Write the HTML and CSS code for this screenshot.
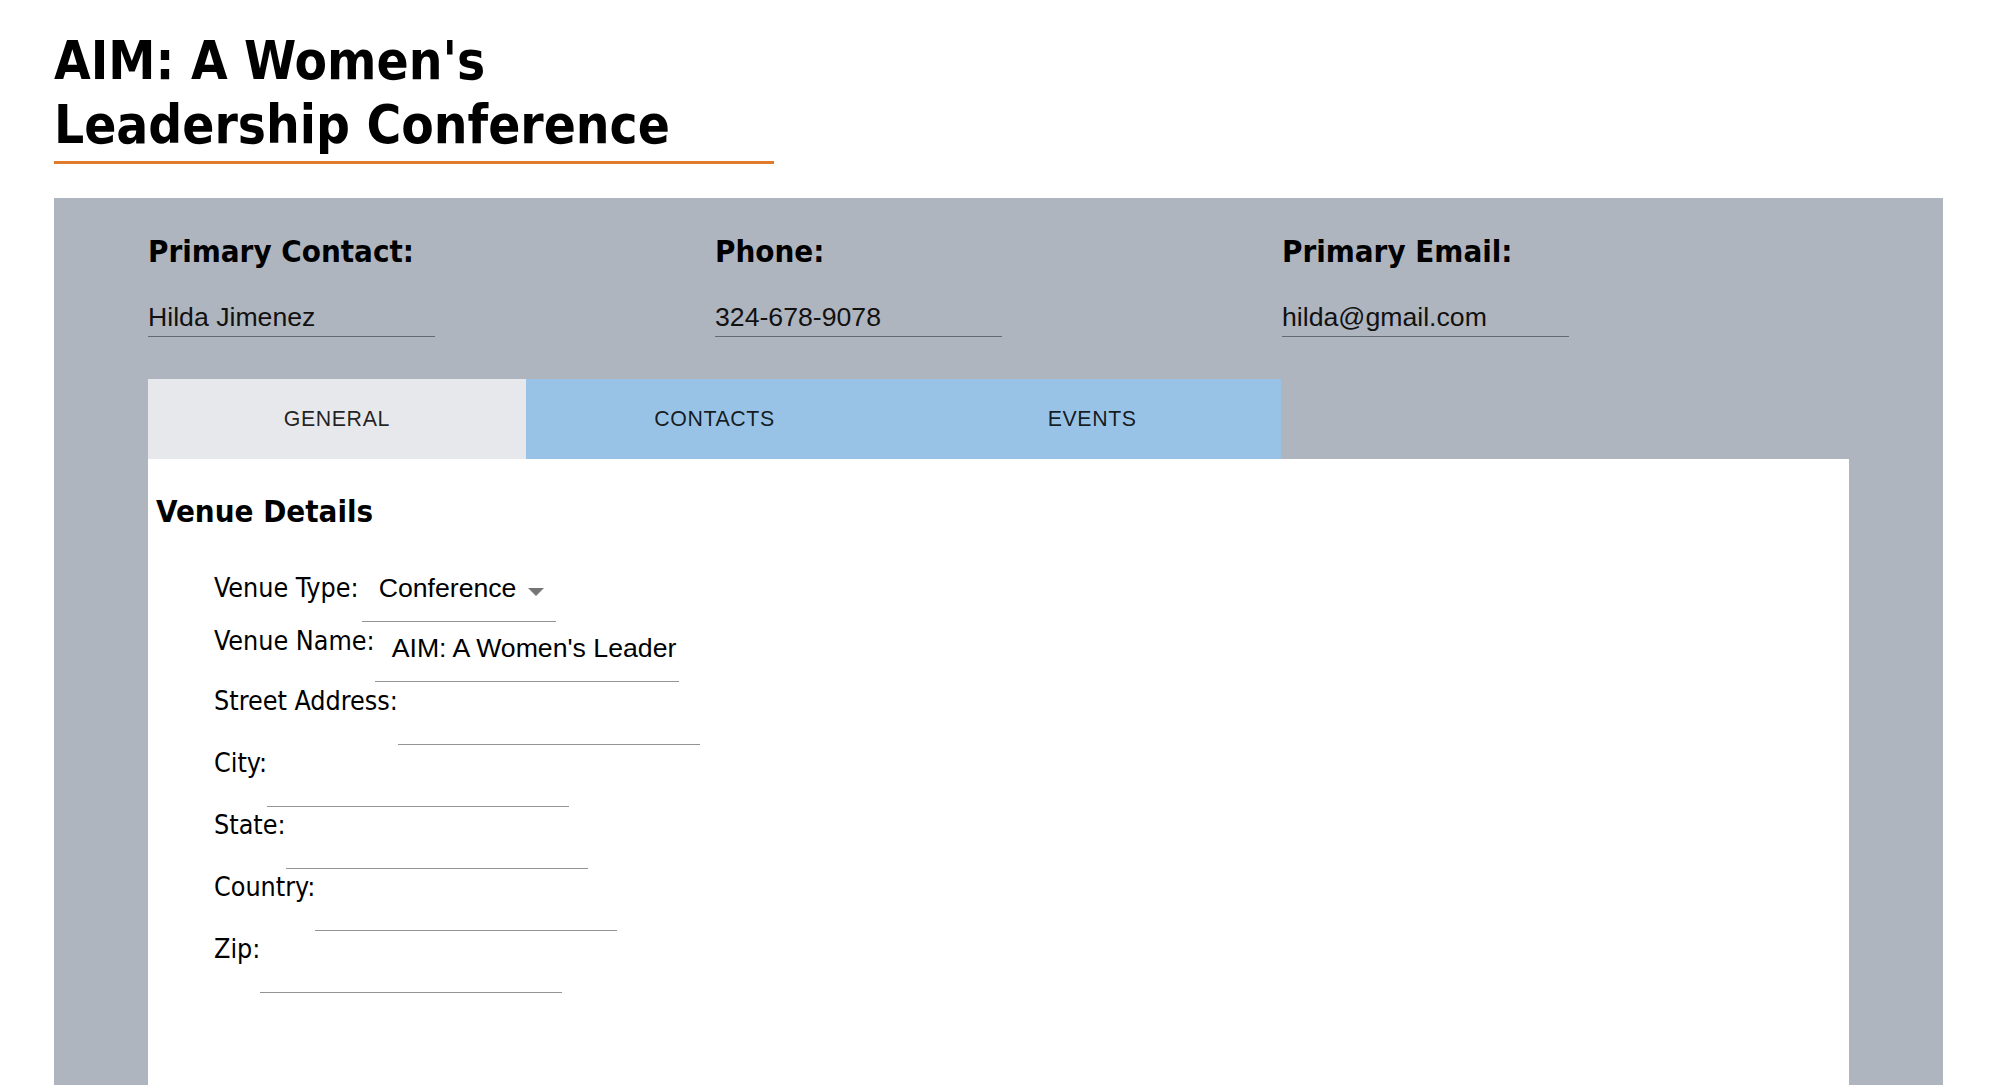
FILE: index.html
```html
<!DOCTYPE html>
<html>
<head>
<meta charset="utf-8">
<link rel="stylesheet" href="styles.css">
</head>
<body>
<div class="page">
  <h1 class="title">AIM: A Women's<br>Leadership Conference</h1>
  <div class="panel">
    <div class="summary">
      <div class="summary-item">
        <div class="summary-label">Primary Contact:</div>
        <div class="summary-value">Hilda Jimenez</div>
      </div>
      <div class="summary-item">
        <div class="summary-label">Phone:</div>
        <div class="summary-value">324-678-9078</div>
      </div>
      <div class="summary-item">
        <div class="summary-label">Primary Email:</div>
        <div class="summary-value">hilda@gmail.com</div>
      </div>
    </div>
    <div class="tabs">
      <div class="tab tab-active">GENERAL</div>
      <div class="tab">CONTACTS</div>
      <div class="tab">EVENTS</div>
    </div>
    <div class="content">
      <h2 class="section-title">Venue Details</h2>
      <div class="form">
        <div class="field field-select">
          <span class="field-label">Venue Type:</span>
          <div class="select">
            <span class="select-value">Conference</span>
            <svg class="select-arrow" width="16" height="8" viewBox="0 0 16 8"><path d="M0 0 L16 0 L8 8 Z" fill="#757575"/></svg>
          </div>
        </div>
        <div class="field field-name">
          <span class="field-label">Venue Name:</span>
          <div class="input input-filled"><span class="input-text">AIM: A Women's Leader</span></div>
        </div>
        <div class="field">
          <span class="field-label">Street Address:</span>
          <div class="input"></div>
        </div>
        <div class="field">
          <span class="field-label">City:</span>
          <div class="input"></div>
        </div>
        <div class="field">
          <span class="field-label">State:</span>
          <div class="input"></div>
        </div>
        <div class="field">
          <span class="field-label">Country:</span>
          <div class="input"></div>
        </div>
        <div class="field">
          <span class="field-label">Zip:</span>
          <div class="input"></div>
        </div>
      </div>
    </div>
  </div>
</div>
</body>
</html>
```
FILE: styles.css
```css
html, body {
  margin: 0;
  padding: 0;
  background: #ffffff;
}

body {
  font-family: "Liberation Sans", Arial, sans-serif;
  color: #000;
  overflow: hidden;
}

.page {
  padding: 29px 0 0 54px;
}

.title {
  font-family: "DejaVu Sans Condensed", "DejaVu Sans", sans-serif;
  font-weight: bold;
  font-size: 52.7px;
  line-height: 64px;
  margin: 0;
  width: 720px;
  padding-bottom: 4px;
  border-bottom: 3px solid #e07b2d;
}

.panel {
  margin-top: 34px;
  width: 1889px;
  box-sizing: border-box;
  background: #afb5bf;
  padding: 35px 94px 0 94px;
  min-height: 900px;
}

.summary {
  display: grid;
  grid-template-columns: repeat(3, 1fr);
}

.summary-label {
  font-family: "DejaVu Sans Condensed", "DejaVu Sans", sans-serif;
  font-weight: bold;
  font-size: 31px;
  line-height: 36px;
}

.summary-value {
  margin-top: 33px;
  width: 287px;
  font-size: 26.67px;
  line-height: 30px;
  padding-bottom: 4px;
  border-bottom: 1px solid rgba(0, 0, 0, 0.42);
  color: #111;
}

.tabs {
  margin-top: 42px;
  display: flex;
  width: 1133px;
}

.tab {
  flex: 1;
  height: 80px;
  display: flex;
  align-items: center;
  justify-content: center;
  background: #99c3e6;
  font-size: 21.33px;
  letter-spacing: 0.02857em;
  color: rgba(0, 0, 0, 0.87);
}

.tab-active {
  background: #e7e8ec;
}

.content {
  background: #ffffff;
  min-height: 640px;
  padding: 34px 8px 0 8px;
}

.section-title {
  margin: 0;
  font-family: "DejaVu Sans Condensed", "DejaVu Sans", sans-serif;
  font-weight: bold;
  font-size: 31px;
  line-height: 36px;
}

.form {
  margin-top: 44px;
  padding-left: 58px;
  display: flex;
  flex-direction: column;
}

.field {
  display: flex;
  align-items: flex-start;
  height: 62px;
}

.field-select {
  height: 53px;
}

.field-name {
  height: 60px;
}

.field-label {
  font-family: "DejaVu Sans Condensed", "DejaVu Sans", sans-serif;
  font-size: 26.67px;
  line-height: 30px;
  white-space: nowrap;
}

.select {
  margin-left: 3px;
  width: 194px;
  border-bottom: 1px solid rgba(0, 0, 0, 0.42);
  display: flex;
  align-items: flex-start;
  padding-left: 17px;
  box-sizing: border-box;
  height: 49px;
}

.select-value {
  font-size: 26.67px;
  line-height: 30px;
}

.select-arrow {
  margin-left: 12px;
  margin-top: 15px;
}

.input {
  width: 302px;
  height: 59px;
  box-sizing: border-box;
  border-bottom: 1px solid rgba(0, 0, 0, 0.42);
}

.input-filled {
  width: 304px;
  height: 56px;
  padding: 7px 0 0 17px;
  overflow: hidden;
  white-space: nowrap;
}

.input-text {
  font-size: 26.67px;
  line-height: 30px;
}
```
